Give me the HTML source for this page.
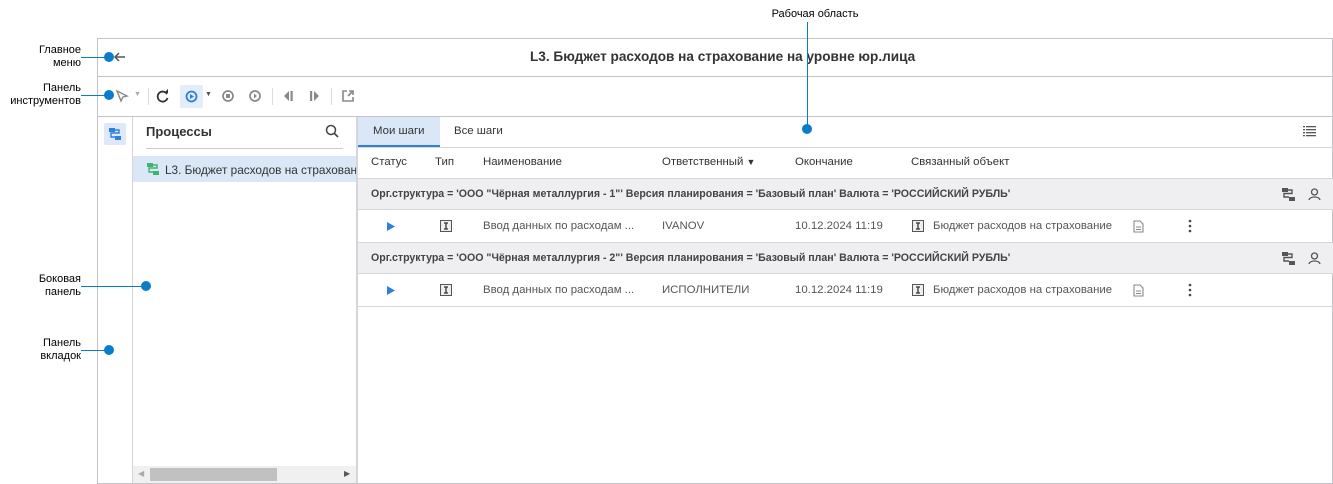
<!DOCTYPE html>
<html><head><meta charset="utf-8"><style>
*{box-sizing:border-box;margin:0;padding:0}
body{width:1333px;height:484px;background:#fff;font-family:"Liberation Sans",sans-serif;position:relative;overflow:hidden;color:#333}
.a{position:absolute}
.ann{position:absolute;font-size:11px;color:#000;text-align:right;line-height:13px}
.dot{position:absolute;width:10px;height:10px;border-radius:50%;background:#0a7ccc}
.hl{position:absolute;height:1px;background:#0a7ccc}
.t{font-size:11.4px;color:#333;position:absolute;white-space:nowrap}
.b{font-weight:bold}
.g{font-size:10.6px}
.ico{position:absolute}
</style></head><body>
<div class="a" style="left:97px;top:38px;width:1236px;height:446px;border:1px solid #c3c3c8"></div>
<div class="a" style="left:97px;top:76px;width:1236px;height:1px;background:#c3c3c8"></div>
<div class="a" style="left:97px;top:116px;width:1236px;height:1px;background:#c3c3c8"></div>
<div class="t b" style="left:530px;top:49px;font-size:13.6px;color:#333">L3. Бюджет расходов на страхование на уровне юр.лица</div>
<svg class="ico" style="left:113px;top:51px" width="14" height="12"><path d="M12 6H2M6 2L2 6l4 4" stroke="#555" stroke-width="1.5" fill="none"/></svg>
<svg class="ico" style="left:115px;top:89px" width="14" height="14"><path d="M2 2l10 5-4 1-2 4z" fill="none" stroke="#888" stroke-width="1.4"/></svg>
<div class="t" style="left:134px;top:91px;font-size:7px;color:#aaa">▼</div>
<div class="a" style="left:148px;top:88px;width:1px;height:17px;background:#ddd"></div>
<svg class="ico" style="left:156px;top:89px" width="14" height="14"><path d="M11 5A5 5 0 1 0 11.5 9" stroke="#333" stroke-width="1.8" fill="none"/><path d="M8 4h4V0z" fill="#333"/></svg>
<div class="a" style="left:180px;top:85px;width:23px;height:23px;background:#e3edfb;border-radius:2px"></div>
<svg class="ico" style="left:184px;top:89px" width="15" height="15"><circle cx="7.5" cy="7.5" r="5" stroke="#2f7fdc" stroke-width="1.8" fill="none"/><path d="M6 5l4 2.5L6 10z" fill="#2f7fdc"/></svg>
<div class="t" style="left:205px;top:91px;font-size:7px;color:#555">▼</div>
<svg class="ico" style="left:221px;top:89px" width="14" height="14"><circle cx="7" cy="7" r="5" stroke="#888" stroke-width="1.7" fill="none"/><rect x="5" y="5" width="4" height="4" fill="#888"/></svg>
<svg class="ico" style="left:248px;top:89px" width="14" height="14"><circle cx="7" cy="7" r="5" stroke="#888" stroke-width="1.7" fill="none"/><path d="M6 4.5l3 2.5-3 2.5z" fill="#888"/></svg>
<div class="a" style="left:272px;top:88px;width:1px;height:17px;background:#ddd"></div>
<svg class="ico" style="left:282px;top:90px" width="12" height="12"><path d="M7 1L2 6l5 5z" fill="#888"/><rect x="8.5" y="1" width="2.2" height="10" fill="#888"/></svg>
<svg class="ico" style="left:309px;top:90px" width="12" height="12"><rect x="1" y="1" width="2.2" height="10" fill="#888"/><path d="M5 1l5 5-5 5z" fill="#888"/></svg>
<div class="a" style="left:331px;top:88px;width:1px;height:17px;background:#ddd"></div>
<svg class="ico" style="left:342px;top:90px" width="12" height="12"><path d="M5 1H1v10h10V7" stroke="#888" stroke-width="1.6" fill="none"/><path d="M6 6l5-5M7 1h4v4" stroke="#888" stroke-width="1.6" fill="none"/></svg>
<div class="a" style="left:132px;top:117px;width:1px;height:366px;background:#d6d6da"></div>
<div class="a" style="left:104px;top:123px;width:22px;height:22px;background:#dde9fb;border-radius:2px"></div>
<svg class="ico" style="left:108px;top:127px" width="14" height="14"><rect x="1" y="1" width="6" height="4" fill="#2f7fdc"/><rect x="7" y="9" width="6" height="4" fill="#2f7fdc"/><path d="M7 3h4v3H3v4h4" stroke="#2f7fdc" stroke-width="1.4" fill="none"/></svg>
<div class="t b" style="left:146px;top:124px;font-size:13px">Процессы</div>
<svg class="ico" style="left:325px;top:124px" width="14" height="14"><circle cx="6" cy="6" r="4.5" stroke="#444" stroke-width="1.5" fill="none"/><path d="M9.5 9.5L13 13" stroke="#444" stroke-width="1.6"/></svg>
<div class="a" style="left:146px;top:148px;width:197px;height:1px;background:#ccc"></div>
<div class="a" style="left:133px;top:156px;width:223px;height:26px;background:#dae7f7"></div>
<svg class="ico" style="left:146px;top:162px" width="14" height="14"><rect x="1" y="1" width="6" height="4" fill="#3db36b"/><rect x="7" y="9" width="6" height="4" fill="#3db36b"/><path d="M7 3h4v3H3v4h4" stroke="#3db36b" stroke-width="1.4" fill="none"/></svg>
<div class="a" style="left:165px;top:156px;width:191px;height:26px;overflow:hidden"><div class="t" style="left:0;top:7px;font-size:11.8px">L3. Бюджет расходов на страхование</div></div>
<div class="a" style="left:133px;top:466px;width:223px;height:17px;background:#f0f0f0"></div>
<div class="a" style="left:150px;top:468px;width:127px;height:13px;background:#c1c1c1"></div>
<div class="t" style="left:138px;top:469px;font-size:8px;color:#aaa">◀</div>
<div class="t" style="left:344px;top:469px;font-size:8px;color:#555">▶</div>
<div class="a" style="left:356px;top:117px;width:2px;height:366px;background:#d6d6da"></div>
<div class="a" style="left:358px;top:117px;width:82px;height:30px;background:#dae7f7;border-bottom:2px solid #2f7fdc"></div>
<div class="t" style="left:373px;top:125px">Мои шаги</div>
<div class="t" style="left:454px;top:125px">Все шаги</div>
<svg class="ico" style="left:1303px;top:125px" width="13" height="12"><g fill="#555"><rect x="0" y="1" width="2" height="1.3"/><rect x="3" y="1" width="10" height="1.3"/><rect x="0" y="4" width="2" height="1.3"/><rect x="3" y="4" width="10" height="1.3"/><rect x="0" y="7" width="2" height="1.3"/><rect x="3" y="7" width="10" height="1.3"/><rect x="0" y="10" width="2" height="1.3"/><rect x="3" y="10" width="10" height="1.3"/></g></svg>
<div class="a" style="left:358px;top:147px;width:975px;height:1px;background:#d6d6da"></div>
<div class="t" style="left:371px;top:156px">Статус</div>
<div class="t" style="left:435px;top:156px">Тип</div>
<div class="t" style="left:483px;top:156px">Наименование</div>
<div class="t" style="left:662px;top:156px">Ответственный <span style="font-size:9px">▼</span></div>
<div class="t" style="left:795px;top:156px">Окончание</div>
<div class="t" style="left:911px;top:156px">Связанный объект</div>
<div class="a" style="left:358px;top:178px;width:975px;height:32px;background:#efeff2;border-top:1px solid #d6d6da;border-bottom:1px solid #d6d6da"></div>
<div class="t b g" style="left:371px;top:188px;color:#444">Орг.структура = 'ООО "Чёрная металлургия - 1"' Версия планирования = 'Базовый план' Валюта = 'РОССИЙСКИЙ РУБЛЬ'</div>
<div class="a" style="left:358px;top:242px;width:975px;height:32px;background:#efeff2;border-top:1px solid #d6d6da;border-bottom:1px solid #d6d6da"></div>
<div class="t b g" style="left:371px;top:252px;color:#444">Орг.структура = 'ООО "Чёрная металлургия - 2"' Версия планирования = 'Базовый план' Валюта = 'РОССИЙСКИЙ РУБЛЬ'</div>
<div class="a" style="left:358px;top:306px;width:975px;height:1px;background:#d6d6da"></div>
<svg class="ico" style="left:1282px;top:188px" width="13" height="13"><rect x="0" y="0" width="6" height="4" fill="#555"/><rect x="7" y="9" width="6" height="4" fill="#555"/><path d="M6 2h4v3.5H2V9h5" stroke="#555" stroke-width="1.4" fill="none"/></svg>
<svg class="ico" style="left:1308px;top:188px" width="13" height="13"><circle cx="6.5" cy="4" r="3" stroke="#555" stroke-width="1.3" fill="none"/><path d="M1 12c1-4 10-4 11 0" stroke="#555" stroke-width="1.3" fill="none"/></svg>
<svg class="ico" style="left:1282px;top:252px" width="13" height="13"><rect x="0" y="0" width="6" height="4" fill="#555"/><rect x="7" y="9" width="6" height="4" fill="#555"/><path d="M6 2h4v3.5H2V9h5" stroke="#555" stroke-width="1.4" fill="none"/></svg>
<svg class="ico" style="left:1308px;top:252px" width="13" height="13"><circle cx="6.5" cy="4" r="3" stroke="#555" stroke-width="1.3" fill="none"/><path d="M1 12c1-4 10-4 11 0" stroke="#555" stroke-width="1.3" fill="none"/></svg>
<svg class="ico" style="left:386px;top:221px" width="10" height="11"><path d="M1 1l8 4.5L1 10z" fill="#2f7fdc"/></svg>
<svg class="ico" style="left:440px;top:220px" width="12" height="12"><rect x="0.5" y="0.5" width="11" height="11" fill="#eee" stroke="#555"/><path d="M4 3h4M4 9h4M6 3v6" stroke="#333" stroke-width="1.3"/></svg>
<div class="t" style="left:483px;top:220px;color:#555">Ввод данных по расходам ...</div>
<div class="t" style="left:662px;top:220px;color:#555">IVANOV</div>
<div class="t" style="left:795px;top:220px;color:#555">10.12.2024 11:19</div>
<svg class="ico" style="left:912px;top:220px" width="12" height="12"><rect x="0.5" y="0.5" width="11" height="11" fill="#eee" stroke="#555"/><path d="M4 3h4M4 9h4M6 3v6" stroke="#333" stroke-width="1.3"/></svg>
<div class="t" style="left:933px;top:220px;color:#555">Бюджет расходов на страхование</div>
<svg class="ico" style="left:1133px;top:220px" width="11" height="13"><path d="M1 1h6l3 3v8H1z" fill="none" stroke="#888" stroke-width="1.1"/><path d="M3 7h5M3 9.5h5" stroke="#888"/></svg>
<svg class="ico" style="left:1188px;top:219px" width="4" height="14"><circle cx="2" cy="2" r="1.3" fill="#444"/><circle cx="2" cy="7" r="1.3" fill="#444"/><circle cx="2" cy="12" r="1.3" fill="#444"/></svg>
<svg class="ico" style="left:386px;top:285px" width="10" height="11"><path d="M1 1l8 4.5L1 10z" fill="#2f7fdc"/></svg>
<svg class="ico" style="left:440px;top:284px" width="12" height="12"><rect x="0.5" y="0.5" width="11" height="11" fill="#eee" stroke="#555"/><path d="M4 3h4M4 9h4M6 3v6" stroke="#333" stroke-width="1.3"/></svg>
<div class="t" style="left:483px;top:284px;color:#555">Ввод данных по расходам ...</div>
<div class="t" style="left:662px;top:284px;color:#555">ИСПОЛНИТЕЛИ</div>
<div class="t" style="left:795px;top:284px;color:#555">10.12.2024 11:19</div>
<svg class="ico" style="left:912px;top:284px" width="12" height="12"><rect x="0.5" y="0.5" width="11" height="11" fill="#eee" stroke="#555"/><path d="M4 3h4M4 9h4M6 3v6" stroke="#333" stroke-width="1.3"/></svg>
<div class="t" style="left:933px;top:284px;color:#555">Бюджет расходов на страхование</div>
<svg class="ico" style="left:1133px;top:284px" width="11" height="13"><path d="M1 1h6l3 3v8H1z" fill="none" stroke="#888" stroke-width="1.1"/><path d="M3 7h5M3 9.5h5" stroke="#888"/></svg>
<svg class="ico" style="left:1188px;top:283px" width="4" height="14"><circle cx="2" cy="2" r="1.3" fill="#444"/><circle cx="2" cy="7" r="1.3" fill="#444"/><circle cx="2" cy="12" r="1.3" fill="#444"/></svg>
<div class="ann" style="left:0;top:44px;width:81px">Главное<br>меню</div>
<div class="hl" style="left:81px;top:57px;width:28px"></div><div class="dot" style="left:104px;top:52px"></div>
<div class="ann" style="left:0;top:82px;width:81px">Панель<br>инструментов</div>
<div class="hl" style="left:81px;top:95px;width:28px"></div><div class="dot" style="left:104px;top:90px"></div>
<div class="ann" style="left:0;top:273px;width:81px">Боковая<br>панель</div>
<div class="hl" style="left:81px;top:286px;width:64px"></div><div class="dot" style="left:141px;top:281px"></div>
<div class="ann" style="left:0;top:337px;width:81px">Панель<br>вкладок</div>
<div class="hl" style="left:81px;top:350px;width:28px"></div><div class="dot" style="left:104px;top:345px"></div>
<div class="ann" style="left:760px;top:8px;width:110px;text-align:center">Рабочая область</div>
<div class="a" style="left:807px;top:22px;width:1px;height:106px;background:#0a7ccc"></div>
<div class="dot" style="left:802px;top:124px"></div>
</body></html>
